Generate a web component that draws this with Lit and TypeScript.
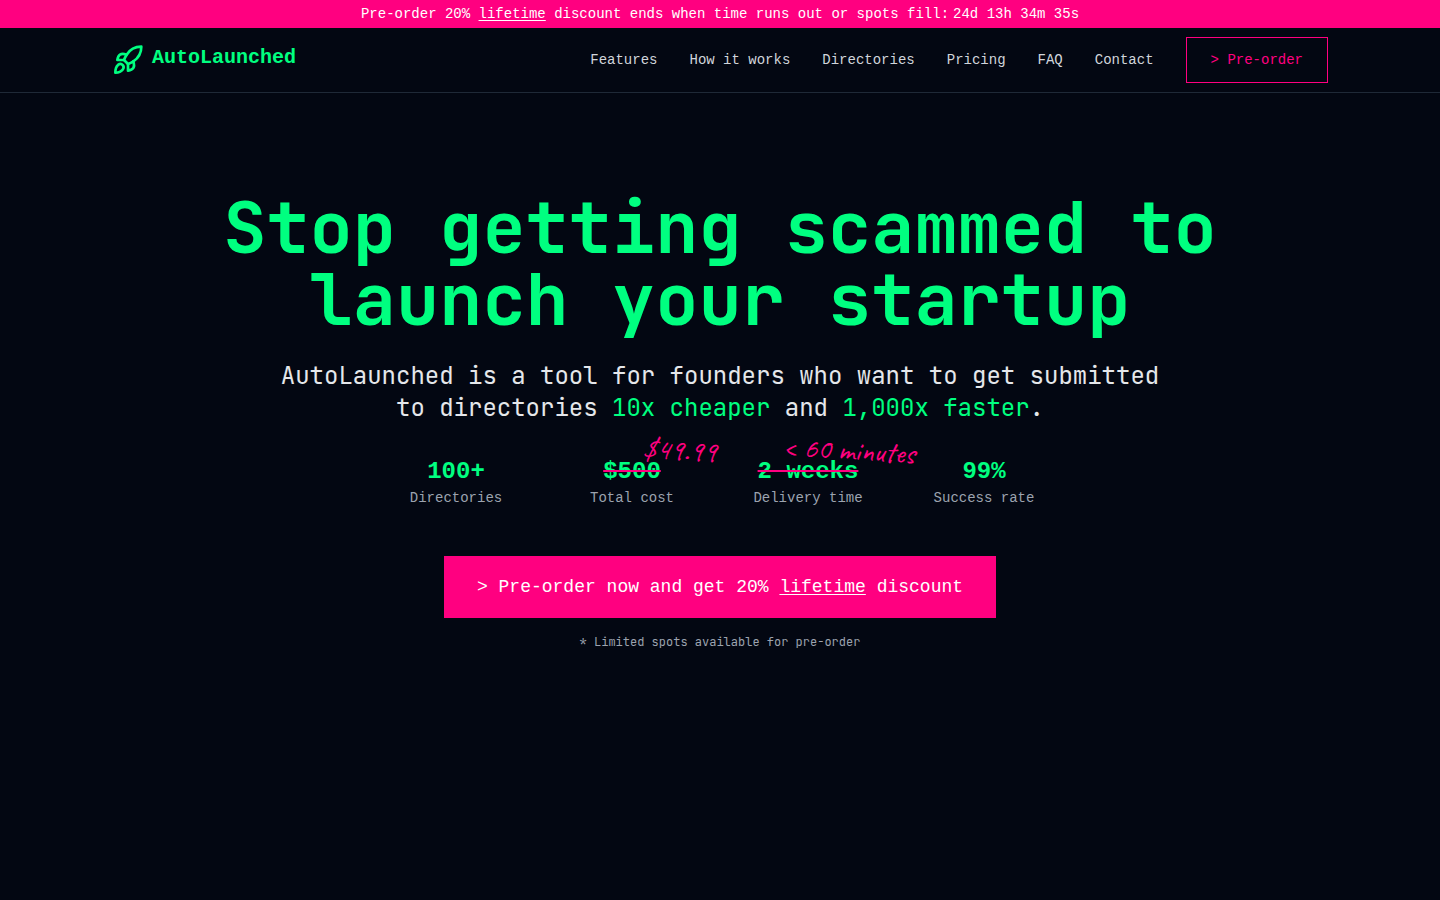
import { LitElement, html, css } from "lit";
import { customElement } from "lit/decorators.js";

const NAV = ["Features", "How it works", "Directories", "Pricing", "FAQ", "Contact"];

interface Stat {
  value: string;
  label: string;
  note?: string;
}

const STATS: Stat[] = [
  { value: "100+", label: "Directories" },
  { value: "$500", label: "Total cost", note: "$49.99" },
  { value: "2 weeks", label: "Delivery time", note: "< 60 minutes" },
  { value: "99%", label: "Success rate" },
];

@customElement("app-root")
export class AppRoot extends LitElement {
  static styles = css`
    :host {
      --green: #00ff80;
      --pink: #ff0080;
      --display: "JetBrains Mono", "DejaVu Sans Mono", monospace;
      display: flex;
      flex-direction: column;
      min-height: 100vh;
      background: #030712;
      color: #e5e7eb;
      font-family: "Liberation Mono", monospace;
      font-size: 14px;
      line-height: 20px;
    }
    * {
      box-sizing: border-box;
    }
    a {
      color: inherit;
      text-decoration: none;
    }
    .underlined {
      text-decoration: underline;
      text-underline-offset: 2px;
    }
    .banner {
      display: flex;
      justify-content: center;
      gap: 4px;
      padding: 4px 16px;
      background: var(--pink);
      color: #fff;
    }
    .header {
      border-bottom: 1px solid #1f2937;
    }
    .bar {
      display: flex;
      align-items: center;
      justify-content: space-between;
      max-width: 1280px;
      height: 64px;
      margin: 0 auto;
      padding: 0 32px;
    }
    .brand {
      display: flex;
      gap: 8px;
      color: var(--green);
      font-size: 20px;
      font-weight: 700;
      line-height: 28px;
    }
    .rocket {
      width: 32px;
      height: 32px;
    }
    .nav {
      display: flex;
      align-items: center;
      gap: 32px;
      color: #d1d5db;
    }
    .order {
      padding: 12px 24px;
      border: 1px solid var(--pink);
      background: transparent;
      color: var(--pink);
      font: inherit;
    }
    .hero {
      display: flex;
      flex-direction: column;
      align-items: center;
      padding: 99px 32px 0;
      text-align: center;
    }
    .title {
      max-width: 1024px;
      margin: 0 0 24px;
      color: var(--green);
      font-family: var(--display);
      font-size: 72px;
      font-weight: 700;
      line-height: 72px;
    }
    .lead {
      max-width: 896px;
      margin: 0 0 32px;
      font-family: var(--display);
      font-size: 24px;
      line-height: 32px;
    }
    .accent {
      color: var(--green);
    }
    .stats {
      display: grid;
      grid-template-columns: repeat(4, 1fr);
      gap: 32px;
      width: 100%;
      max-width: 672px;
      margin: 0 0 48px;
    }
    .stat {
      display: flex;
      flex-direction: column;
      align-items: center;
    }
    .value {
      position: relative;
      color: var(--green);
      font-size: 24px;
      font-weight: 700;
      line-height: 32px;
    }
    .struck {
      text-decoration: line-through 2px var(--pink);
    }
    .label {
      color: #9ca3af;
    }
    .note {
      position: absolute;
      top: -24px;
      right: -56px;
      color: var(--pink);
      font-family: Caveat, cursive;
      font-size: 30px;
      font-weight: 500;
      line-height: 36px;
      white-space: nowrap;
      transform: rotate(3deg);
    }
    .cta {
      padding: 16px 32px;
      border: 1px solid var(--pink);
      background: var(--pink);
      color: #fff;
      font: inherit;
      font-size: 18px;
      line-height: 28px;
    }
    .small {
      margin: 16px 0 0;
      color: #9ca3af;
      font-family: var(--display);
      font-size: 12px;
      line-height: 16px;
    }
  `;

  render() {
    return html`
      <div class="banner">
        <span>Pre-order 20% <span class="underlined">lifetime</span> discount ends when time runs out or spots fill:</span>
        <span>24d 13h 34m 35s</span>
      </div>
      <header class="header">
        <div class="bar">
          <a class="brand" href="#">
            <svg class="rocket" viewBox="0 0 24 24" fill="none" stroke="currentColor" stroke-width="2" stroke-linecap="round" stroke-linejoin="round" aria-hidden="true">
              <path d="M2.5 21.5c0-2.6.6-4.600 2-5.800 1.200-.9 2.700-.8 3.500.1.900.9.900 2.200.1 3.300-1.200 1.600-3 2.300-5.600 2.400z" />
              <path d="m12 15-3-3a22 22 0 0 1 2-3.95A12.88 12.88 0 0 1 22 2c0 2.72-.78 7.5-6 11a22.35 22.35 0 0 1-4 2z" />
              <path d="M9 12H4s.55-3.03 2-4c1.62-1.08 5 0 5 0" />
              <path d="M12 15v5s3.03-.55 4-2c1.08-1.62 0-5 0-5" />
            </svg>
            <span>AutoLaunched</span>
          </a>
          <nav class="nav">
            ${NAV.map((item) => html`<a href="#">${item}</a>`)}
            <button class="order">&gt; Pre-order</button>
          </nav>
        </div>
      </header>
      <main class="hero">
        <h1 class="title">Stop getting scammed to launch your startup</h1>
        <p class="lead">
          AutoLaunched is a tool for founders who want to get submitted to directories
          <span class="accent">10x cheaper</span> and <span class="accent">1,000x faster</span>.
        </p>
        <div class="stats">
          ${STATS.map(
            (s) => html`<div class="stat">
              <div class="value">
                <span class="${s.note ? "struck" : ""}">${s.value}</span>
                ${s.note ? html`<span class="note">${s.note}</span>` : ""}
              </div>
              <span class="label">${s.label}</span>
            </div>`
          )}
        </div>
        <button class="cta">&gt; Pre-order now and get 20% <span class="underlined">lifetime</span> discount</button>
        <p class="small">* Limited spots available for pre-order</p>
      </main>
    `;
  }
}
